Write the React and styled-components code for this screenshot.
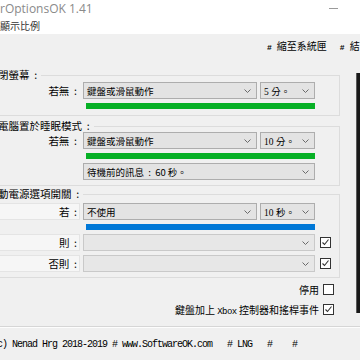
import React from "react";
import styled, { createGlobalStyle } from "styled-components";

const GlobalStyle = createGlobalStyle`
  html, body {
    margin: 0;
    padding: 0;
    background: #f0f0f0;
  }
  body {
    font-family: "Noto Sans CJK TC", "Noto Sans", sans-serif;
  }
`;

const Window = styled.div`
  width: 360px;
  height: 360px;
  overflow: hidden;
  background: #f0f0f0;
  display: flex;
  flex-direction: column;
  color: #000;
`;

const TitleBar = styled.div`
  height: 17px;
  flex: none;
  background: #fff;
  display: flex;
  align-items: center;
  justify-content: space-between;
  padding-right: 22px;
`;

const Title = styled.span`
  font-family: "Open Sans", "Noto Sans", sans-serif;
  font-size: 12px;
  color: #8a8a8a;
  white-space: nowrap;
`;

const Minimize = styled.span`
  width: 9px;
  height: 1px;
  background: #9a9a9a;
`;

const MenuBar = styled.div`
  height: 17px;
  flex: none;
  background: #fff;
  display: flex;
  align-items: center;
  font-size: 10px;
  color: #333;
`;

const Toolbar = styled.div`
  height: 23px;
  flex: none;
  display: flex;
  align-items: center;
  gap: 13px;
  padding-left: 267px;
  font-size: 10px;
  white-space: nowrap;
`;

const Hash = styled.span`
  font-family: "Liberation Mono", monospace;
  font-size: 8px;
  font-weight: bold;
  margin-right: 5px;
`;

const Main = styled.div`
  flex: 1;
  display: flex;
  align-items: flex-start;
  padding-top: 12px;
  min-height: 0;
`;

const Column = styled.div`
  flex: none;
  width: 352px;
  margin-left: -12px;
  display: flex;
  flex-direction: column;
`;

const Group = styled.fieldset`
  margin: ${(p) => p.$gap}px 0 0 0;
  padding: ${(p) => p.$top}px 0 ${(p) => p.$bottom}px 0;
  border: 1px solid #dcdcdc;
  min-inline-size: 0;
`;

const Legend = styled.legend`
  padding: 0 4px 0 0;
  margin-left: 9px;
  font-size: 10.5px;
  line-height: 12px;
  white-space: pre;
`;

const Rows = styled.div`
  display: grid;
  grid-template-columns: 91px 232px 11px;
  column-gap: 3px;
  row-gap: 4px;
  align-items: center;
`;

const Label = styled.div`
  grid-column: 1;
  height: 17px;
  box-sizing: border-box;
  display: flex;
  align-items: center;
  justify-content: flex-end;
  padding-right: 2px;
  font-size: 10.5px;
  white-space: pre;
  background: ${(p) => (p.$boxed ? "#f6f6f6" : "transparent")};
  border: 1px solid ${(p) => (p.$boxed ? "#e4e4e4" : "transparent")};
`;

const Controls = styled.div`
  grid-column: 2;
  display: flex;
  gap: 3px;
`;

const Combo = styled.div`
  flex: ${(p) => (p.$width ? `0 0 ${p.$width}px` : "1")};
  height: 17px;
  box-sizing: border-box;
  border: 1px solid ${(p) => (p.$disabled ? "#c9c9c9" : "#adadad")};
  background: ${(p) => (p.$disabled ? "#e7e7e7" : "#e3e3e3")};
  display: flex;
  align-items: center;
  justify-content: space-between;
  padding: 0 5px 0 3px;
  font-family: ${(p) =>
    p.$serif
      ? `"Liberation Serif", "Noto Sans CJK TC", serif`
      : `"Noto Sans CJK TC", sans-serif`};
  font-size: 9.5px;
  white-space: pre;
  overflow: hidden;
`;

const Bar = styled.div`
  grid-column: 2;
  height: 6px;
  margin-left: 3px;
  background: ${(p) => p.$color};
`;

const Box = styled.span`
  display: inline-flex;
  align-items: center;
  justify-content: center;
  width: 11px;
  height: 11px;
  box-sizing: border-box;
  border: 1px solid #333;
  background: #fff;
  margin-left: ${(p) => p.$shift || 0}px;
`;

const CheckRow = styled.div`
  display: flex;
  justify-content: flex-end;
  align-items: center;
  gap: 4px;
  padding-right: 6px;
  margin-top: ${(p) => p.$gap}px;
  font-size: 10px;
  white-space: nowrap;
`;

const Mono = styled.span`
  font-family: "Liberation Mono", monospace;
  font-size: 9px;
  letter-spacing: -0.5px;
`;

const DarkPanel = styled.div`
  flex: none;
  width: 10px;
  height: 240px;
  margin: 4px 0 0 16px;
  background: #191919;
  border-left: 1px solid #5a5a5a;
`;

const Separator = styled.div`
  flex: none;
  height: 1px;
  background: #d6d6d6;
  border-bottom: 1px solid #fdfdfd;
`;

const Footer = styled.div`
  flex: none;
  height: 32px;
  display: flex;
  align-items: center;
  margin-left: -8px;
  font-family: "Liberation Mono", monospace;
  font-size: 10px;
  letter-spacing: -1px;
  white-space: pre;
`;

const Chevron = () => (
  <svg width="7" height="4" viewBox="0 0 7 4">
    <polyline
      points="0.5,0.5 3.5,3.5 6.5,0.5"
      fill="none"
      stroke="#6a6a6a"
      strokeWidth="1"
    />
  </svg>
);

const Check = ({ checked, shift }) => (
  <Box $shift={shift}>
    {checked && (
      <svg width="9" height="9" viewBox="0 0 9 9">
        <polyline
          points="1.5,4.5 3.5,6.5 7.5,1.5"
          fill="none"
          stroke="#333"
          strokeWidth="1.1"
        />
      </svg>
    )}
  </Box>
);

const Select = ({ children, width, disabled, serif }) => (
  <Combo $width={width} $disabled={disabled} $serif={serif}>
    <span>{children}</span>
    <Chevron />
  </Combo>
);

const App = () => {
  return (
    <>
      <GlobalStyle />
      <Window>
        <TitleBar>
          <Title>rOptionsOK 1.41</Title>
          <Minimize />
        </TitleBar>
        <MenuBar>顯示比例</MenuBar>
        <Toolbar>
          <span>
            <Hash>#</Hash>縮至系統匣
          </span>
          <span>
            <Hash>#</Hash>結束
          </span>
        </Toolbar>

        <Main>
          <Column>
            <Group $gap={0} $top={1} $bottom={6}>
              <Legend>閉螢幕  :</Legend>
              <Rows>
                <Label>若無  :</Label>
                <Controls>
                  <Select>鍵盤或滑鼠動作</Select>
                  <Select width={55} serif>
                    5 分。
                  </Select>
                </Controls>
                <Bar $color="#06b025" />
              </Rows>
            </Group>

            <Group $gap={4} $top={0} $bottom={5}>
              <Legend>電腦置於睡眠模式  :</Legend>
              <Rows>
                <Label>若無  :</Label>
                <Controls>
                  <Select>鍵盤或滑鼠動作</Select>
                  <Select width={55} serif>
                    10 分。
                  </Select>
                </Controls>
                <Bar $color="#06b025" />
                <Controls>
                  <Select>待機前的訊息  :  60 秒。</Select>
                </Controls>
              </Rows>
            </Group>

            <Group $gap={2} $top={3} $bottom={5}>
              <Legend>動電源選項開關  :</Legend>
              <Rows>
                <Label $boxed>若  :</Label>
                <Controls>
                  <Select>不使用</Select>
                  <Select width={55} serif>
                    10 秒。
                  </Select>
                </Controls>
                <Bar $color="#0078d7" />
                <Label $boxed>則  :</Label>
                <Controls>
                  <Select disabled />
                </Controls>
                <Check checked shift={2} />
                <Label $boxed>否則  :</Label>
                <Controls>
                  <Select disabled />
                </Controls>
                <Check checked shift={2} />
              </Rows>
            </Group>

            <CheckRow $gap={4}>
              停用 <Check />
            </CheckRow>
            <CheckRow $gap={5}>
              <span>
                鍵盤加上 <Mono>Xbox</Mono> 控制器和搖桿事件
              </span>
              <Check checked />
            </CheckRow>
          </Column>
          <DarkPanel />
        </Main>

        <Separator />
        <Footer>
          {"(c) Nenad Hrg 2018-2019 # www.SoftwareOK.com   # LNG   #    #"}
        </Footer>
      </Window>
    </>
  );
};

export default App;
